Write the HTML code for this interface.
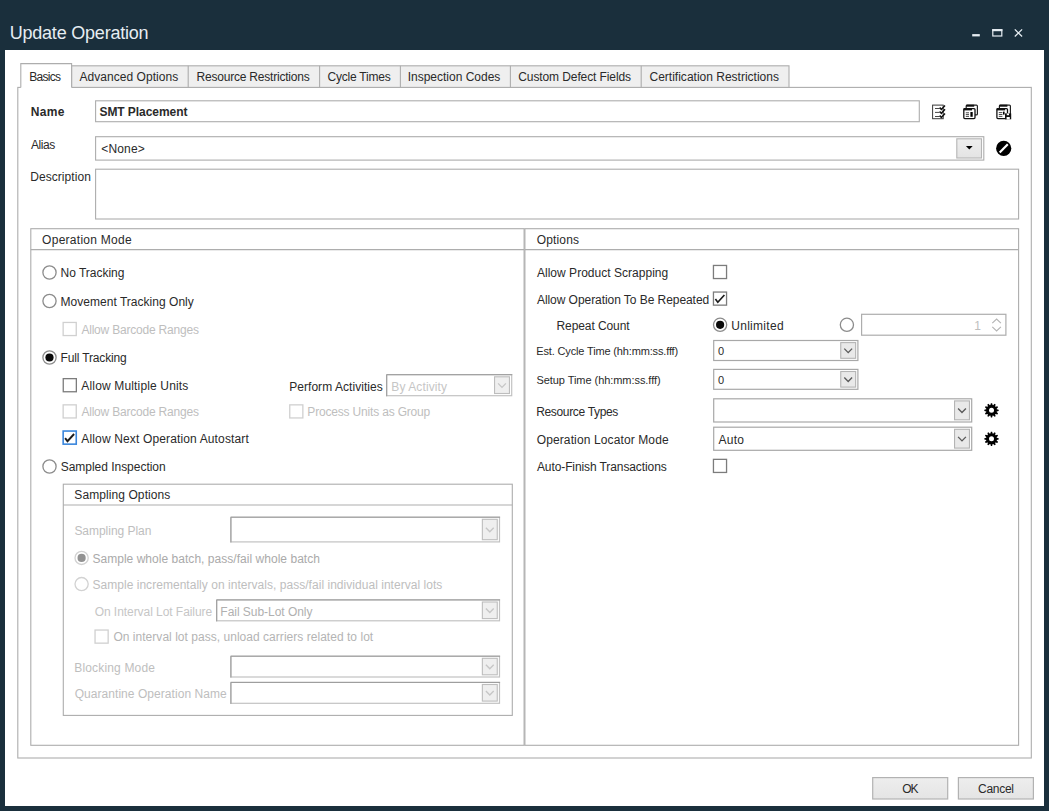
<!DOCTYPE html>
<html><head><meta charset="utf-8"><title>Update Operation</title>
<style>
html,body{margin:0;padding:0;}
body{width:1049px;height:811px;overflow:hidden;background:#1a2f3c;position:relative;font-family:"Liberation Sans",sans-serif;}
.t{position:absolute;white-space:nowrap;font-family:"Liberation Sans",sans-serif;}
.a{position:absolute;box-sizing:border-box;}
.win{left:5px;top:50px;width:1039px;height:756px;background:#fff;}
svg{position:absolute;overflow:visible;}

</style></head>
<body>
<div class="a win"></div>
<svg style="left:0;top:0" width="1049" height="811" viewBox="0 0 1049 811">
<defs><linearGradient id="bg" x1="0" y1="0" x2="0" y2="1"><stop offset="0" stop-color="#eeeeee"/><stop offset="1" stop-color="#e4e4e4"/></linearGradient></defs>
<rect x="972.2" y="34.1" width="7.6" height="2.3" fill="#e6edf2"/>
<rect x="992.8" y="29.8" width="9" height="6.2" fill="none" stroke="#e6edf2" stroke-width="1.2"/>
<rect x="992.2" y="29.1" width="10.2" height="2.1" fill="#e6edf2"/>
<path d="M1014.8 29.4 L1022.1 36.5 M1022.1 29.4 L1014.8 36.5" stroke="#e6edf2" fill="none" stroke-width="1.3"/>
<rect x="17.80" y="87.40" width="1013.50" height="670.60" fill="#fff" stroke="#adadad" stroke-width="1.1" />
<rect x="71.60" y="65.80" width="717.40" height="21.60" fill="#efefef" stroke="#adadad" stroke-width="1.1" />
<path d="M188.20 65.80 L188.20 87.40" stroke="#adadad" stroke-width="1.1" fill="none"/>
<path d="M319.60 65.80 L319.60 87.40" stroke="#adadad" stroke-width="1.1" fill="none"/>
<path d="M400.40 65.80 L400.40 87.40" stroke="#adadad" stroke-width="1.1" fill="none"/>
<path d="M510.40 65.80 L510.40 87.40" stroke="#adadad" stroke-width="1.1" fill="none"/>
<path d="M641.20 65.80 L641.20 87.40" stroke="#adadad" stroke-width="1.1" fill="none"/>
<path d="M20.8 88.0 V63.6 H71.6 V88.0 Z" fill="#fff" stroke="none"/>
<path d="M20.8 87.4 V63.6 H71.6 V87.4" stroke="#adadad" fill="none" stroke-width="1.1"/>
<rect x="95.60" y="100.80" width="823.70" height="20.90" fill="#fff" stroke="#adadad" stroke-width="1.1" />
<rect x="95.60" y="136.70" width="888.20" height="23.40" fill="#fff" stroke="#adadad" stroke-width="1.1" />
<rect x="956.80" y="138.80" width="24.70" height="19.20" fill="url(#bg)" stroke="#b5b5b5" stroke-width="1.1" />
<path d="M965.9 146.1 H972.7 L969.3 149.6 Z" stroke="none" fill="#000" stroke-width="1"/>
<rect x="95.60" y="169.20" width="923.00" height="49.80" fill="#fff" stroke="#adadad" stroke-width="1.1" />
<rect x="30.80" y="228.70" width="493.30" height="516.60" fill="none" stroke="#adadad" stroke-width="1.1" />
<path d="M30.80 249.60 L524.10 249.60" stroke="#adadad" stroke-width="1.1" fill="none"/>
<rect x="524.90" y="228.70" width="493.70" height="516.60" fill="none" stroke="#adadad" stroke-width="1.1" />
<path d="M524.90 249.60 L1018.60 249.60" stroke="#adadad" stroke-width="1.1" fill="none"/>
<rect x="63.30" y="484.20" width="449.00" height="231.20" fill="none" stroke="#adadad" stroke-width="1.1" />
<path d="M63.30 505.00 L512.30 505.00" stroke="#adadad" stroke-width="1.1" fill="none"/>
<circle cx="49.5" cy="272.5" r="6.6" fill="#fff" stroke="#8c8c8c" stroke-width="1.3"/>
<circle cx="49.5" cy="301.0" r="6.6" fill="#fff" stroke="#8c8c8c" stroke-width="1.3"/>
<rect x="63.15" y="322.45" width="13.10" height="13.10" fill="#fff" stroke="#d0d0d0" stroke-width="1.3" />
<circle cx="49.5" cy="357.5" r="6.6" fill="#fff" stroke="#8c8c8c" stroke-width="1.3"/>
<circle cx="49.5" cy="357.5" r="4.1" fill="#0a0a0a"/>
<rect x="63.25" y="378.65" width="13.10" height="13.10" fill="#fff" stroke="#7c7c7c" stroke-width="1.3" />
<rect x="63.15" y="404.85" width="13.10" height="13.10" fill="#fff" stroke="#d0d0d0" stroke-width="1.3" />
<rect x="63.15" y="431.05" width="13.10" height="13.10" fill="#fff" stroke="#3a86dc" stroke-width="1.6" />
<path d="M65.10 438.10 L67.50 441.20 L74.10 434.00" stroke="#1c1c1c" fill="none" stroke-width="1.9"/>
<circle cx="49.5" cy="466.5" r="6.6" fill="#fff" stroke="#8c8c8c" stroke-width="1.3"/>
<rect x="386.70" y="374.70" width="125.00" height="21.00" fill="#fff" stroke="#c2c2c2" stroke-width="1.2" />
<path d="M386.70 396.30 V374.70 H512.30" stroke="#9a9a9a" fill="none" stroke-width="1.0"/>
<rect x="494.55" y="376.80" width="14.90" height="16.70" fill="#efefef" stroke="#bdbdbd" stroke-width="1.1" />
<path d="M498.10 383.35 L502.00 387.35 L505.90 383.35" stroke="#c6c6c6" fill="none" stroke-width="1.35"/>
<rect x="289.75" y="404.85" width="13.10" height="13.10" fill="#fff" stroke="#d0d0d0" stroke-width="1.3" />
<rect x="230.90" y="517.20" width="268.60" height="24.70" fill="#fff" stroke="#c2c2c2" stroke-width="1.2" />
<path d="M230.90 542.50 V517.20 H500.10" stroke="#9a9a9a" fill="none" stroke-width="1.0"/>
<rect x="482.35" y="519.30" width="14.90" height="20.40" fill="#efefef" stroke="#bdbdbd" stroke-width="1.1" />
<path d="M485.90 527.70 L489.80 531.70 L493.70 527.70" stroke="#c6c6c6" fill="none" stroke-width="1.35"/>
<circle cx="81.6" cy="557.9" r="6.6" fill="#fff" stroke="#d2d2d2" stroke-width="1.3"/>
<circle cx="81.6" cy="557.9" r="4.1" fill="#929292"/>
<circle cx="81.6" cy="584.1" r="6.6" fill="#fff" stroke="#d2d2d2" stroke-width="1.3"/>
<rect x="216.70" y="599.90" width="282.80" height="20.90" fill="#fff" stroke="#c2c2c2" stroke-width="1.2" />
<path d="M216.70 621.40 V599.90 H500.10" stroke="#9a9a9a" fill="none" stroke-width="1.0"/>
<rect x="482.35" y="602.00" width="14.90" height="16.60" fill="#efefef" stroke="#bdbdbd" stroke-width="1.1" />
<path d="M485.90 608.50 L489.80 612.50 L493.70 608.50" stroke="#c6c6c6" fill="none" stroke-width="1.35"/>
<rect x="95.05" y="630.05" width="13.10" height="13.10" fill="#fff" stroke="#d0d0d0" stroke-width="1.3" />
<rect x="230.90" y="656.20" width="268.60" height="20.80" fill="#fff" stroke="#c2c2c2" stroke-width="1.2" />
<path d="M230.90 677.60 V656.20 H500.10" stroke="#9a9a9a" fill="none" stroke-width="1.0"/>
<rect x="482.35" y="658.30" width="14.90" height="16.50" fill="#efefef" stroke="#bdbdbd" stroke-width="1.1" />
<path d="M485.90 664.75 L489.80 668.75 L493.70 664.75" stroke="#c6c6c6" fill="none" stroke-width="1.35"/>
<rect x="230.90" y="682.40" width="268.60" height="20.90" fill="#fff" stroke="#c2c2c2" stroke-width="1.2" />
<path d="M230.90 703.90 V682.40 H500.10" stroke="#9a9a9a" fill="none" stroke-width="1.0"/>
<rect x="482.35" y="684.50" width="14.90" height="16.60" fill="#efefef" stroke="#bdbdbd" stroke-width="1.1" />
<path d="M485.90 691.00 L489.80 695.00 L493.70 691.00" stroke="#c6c6c6" fill="none" stroke-width="1.35"/>
<rect x="713.45" y="265.45" width="13.10" height="13.10" fill="#fff" stroke="#7c7c7c" stroke-width="1.3" />
<rect x="713.45" y="292.05" width="13.10" height="13.10" fill="#fff" stroke="#7c7c7c" stroke-width="1.3" />
<path d="M715.40 299.10 L717.80 302.20 L724.40 295.00" stroke="#1c1c1c" fill="none" stroke-width="1.7"/>
<circle cx="720.1" cy="324.8" r="6.6" fill="#fff" stroke="#8c8c8c" stroke-width="1.3"/>
<circle cx="720.1" cy="324.8" r="4.1" fill="#0a0a0a"/>
<circle cx="846.9" cy="324.8" r="6.6" fill="#fff" stroke="#8c8c8c" stroke-width="1.3"/>
<rect x="861.60" y="314.30" width="144.30" height="20.90" fill="#fff" stroke="#adadad" stroke-width="1.2" />
<path d="M992.3 323.1 L996.6 319 L1000.9 323.1 M992.3 326.9 L996.6 331 L1000.9 326.9" stroke="#b4b4b4" fill="none" stroke-width="1.1"/>
<rect x="713.70" y="340.50" width="144.20" height="20.00" fill="#fff" stroke="#a8a8a8" stroke-width="1.2" />
<rect x="840.75" y="342.60" width="14.90" height="15.70" fill="#e9e9e9" stroke="#b4b4b4" stroke-width="1.1" />
<path d="M844.30 348.65 L848.20 352.65 L852.10 348.65" stroke="#5a5a5a" fill="none" stroke-width="1.35"/>
<rect x="713.70" y="369.40" width="144.20" height="19.90" fill="#fff" stroke="#a8a8a8" stroke-width="1.2" />
<rect x="840.75" y="371.50" width="14.90" height="15.60" fill="#e9e9e9" stroke="#b4b4b4" stroke-width="1.1" />
<path d="M844.30 377.50 L848.20 381.50 L852.10 377.50" stroke="#5a5a5a" fill="none" stroke-width="1.35"/>
<rect x="713.70" y="398.80" width="258.00" height="23.20" fill="#fff" stroke="#a8a8a8" stroke-width="1.2" />
<rect x="954.55" y="400.90" width="14.90" height="18.90" fill="#e9e9e9" stroke="#b4b4b4" stroke-width="1.1" />
<path d="M958.10 408.55 L962.00 412.55 L965.90 408.55" stroke="#5a5a5a" fill="none" stroke-width="1.35"/>
<rect x="713.70" y="427.20" width="258.00" height="23.10" fill="#fff" stroke="#a8a8a8" stroke-width="1.2" />
<rect x="954.55" y="429.30" width="14.90" height="18.80" fill="#e9e9e9" stroke="#b4b4b4" stroke-width="1.1" />
<path d="M958.10 436.90 L962.00 440.90 L965.90 436.90" stroke="#5a5a5a" fill="none" stroke-width="1.35"/>
<rect x="713.45" y="459.35" width="13.10" height="13.10" fill="#fff" stroke="#7c7c7c" stroke-width="1.3" />
<path d="M998.67 409.69 L998.67 410.91 L996.78 411.43 L996.64 411.97 L998.02 413.36 L997.41 414.42 L995.51 413.92 L995.12 414.31 L995.62 416.21 L994.56 416.82 L993.17 415.44 L992.63 415.58 L992.11 417.47 L990.89 417.47 L990.37 415.58 L989.83 415.44 L988.44 416.82 L987.38 416.21 L987.88 414.31 L987.49 413.92 L985.59 414.42 L984.98 413.36 L986.36 411.97 L986.22 411.43 L984.33 410.91 L984.33 409.69 L986.22 409.17 L986.36 408.63 L984.98 407.24 L985.59 406.18 L987.49 406.68 L987.88 406.29 L987.38 404.39 L988.44 403.78 L989.83 405.16 L990.37 405.02 L990.89 403.13 L992.11 403.13 L992.63 405.02 L993.17 405.16 L994.56 403.78 L995.62 404.39 L995.12 406.29 L995.51 406.68 L997.41 406.18 L998.02 407.24 L996.64 408.63 L996.78 409.17 Z" stroke="none" fill="#000" stroke-width="1"/>
<circle cx="991.5" cy="410.3" r="2.5" fill="#fff"/>
<path d="M998.67 438.19 L998.67 439.41 L996.78 439.93 L996.64 440.47 L998.02 441.86 L997.41 442.92 L995.51 442.42 L995.12 442.81 L995.62 444.71 L994.56 445.32 L993.17 443.94 L992.63 444.08 L992.11 445.97 L990.89 445.97 L990.37 444.08 L989.83 443.94 L988.44 445.32 L987.38 444.71 L987.88 442.81 L987.49 442.42 L985.59 442.92 L984.98 441.86 L986.36 440.47 L986.22 439.93 L984.33 439.41 L984.33 438.19 L986.22 437.67 L986.36 437.13 L984.98 435.74 L985.59 434.68 L987.49 435.18 L987.88 434.79 L987.38 432.89 L988.44 432.28 L989.83 433.66 L990.37 433.52 L990.89 431.63 L992.11 431.63 L992.63 433.52 L993.17 433.66 L994.56 432.28 L995.62 432.89 L995.12 434.79 L995.51 435.18 L997.41 434.68 L998.02 435.74 L996.64 437.13 L996.78 437.67 Z" stroke="none" fill="#000" stroke-width="1"/>
<circle cx="991.5" cy="438.8" r="2.5" fill="#fff"/>
<rect x="872.70" y="777.60" width="75.00" height="21.40" fill="url(#bg)" stroke="#b2b2b2" stroke-width="1.2" />
<rect x="958.40" y="777.60" width="75.00" height="21.40" fill="url(#bg)" stroke="#b2b2b2" stroke-width="1.2" />
<circle cx="1003.7" cy="148.4" r="7.6" fill="#000"/>
<path d="M999.7 152.5 L1007.8 144.3" stroke="#fff" fill="none" stroke-width="2.2"/>
<!-- icon 1: checklist -->
<rect x="932.6" y="105.1" width="10.6" height="13.6" fill="#fff" stroke="#3a3a3a" stroke-width="1"/>
<path d="M935 108.5 H939.5 M935 112.4 H939.5 M935 116.5 H939.5" stroke="#333" stroke-width="0.9"/>
<path d="M939.6 107.6 L941.4 109.4 L945 105.4 M939.6 111.5 L941.4 113.3 L945 109.3 M939.6 115.6 L941.4 117.4 L945 113.4" stroke="#111" stroke-width="1.5" fill="none"/>
<!-- icon 2: stacked windows -->
<rect x="966.2" y="105.1" width="11.2" height="9.8" rx="1" fill="#fff" stroke="#222" stroke-width="1.2"/>
<rect x="966.2" y="104.7" width="8" height="2" fill="#111"/>
<rect x="963.8" y="108.6" width="11.2" height="10" rx="1" fill="#fff" stroke="#111" stroke-width="1.3"/>
<rect x="963.6" y="108.2" width="8.4" height="2.2" fill="#111"/>
<path d="M965.8 112.8 H969 M965.8 114.6 H969 M965.8 116.4 H969" stroke="#333" stroke-width="0.9"/>
<rect x="970.4" y="112" width="2.3" height="4.8" fill="#000"/>
<!-- icon 3: stacked windows + save -->
<rect x="999.4" y="105.1" width="11" height="9.8" rx="1" fill="#fff" stroke="#222" stroke-width="1.2"/>
<rect x="999.4" y="104.7" width="8" height="2" fill="#111"/>
<rect x="996.9" y="108.6" width="10.6" height="10" rx="1" fill="#fff" stroke="#111" stroke-width="1.3"/>
<rect x="996.7" y="108.2" width="8.4" height="2.2" fill="#111"/>
<path d="M998.8 112.6 H1002.4 M998.8 114.5 H1002.4 M998.8 116.4 H1002.4" stroke="#333" stroke-width="0.9"/>
<rect x="1003" y="111.6" width="1.6" height="3" fill="#000"/>
<rect x="1005" y="113.4" width="6.2" height="5.9" fill="#111"/>
<rect x="1006.8" y="113.4" width="2.2" height="1.8" fill="#fff"/>
<rect x="1006.6" y="117" width="3.2" height="2.3" fill="#fff"/>
</svg>

<span class="t" id="t0" style="left:9.64px;top:23px;font-size:18px;line-height:20px;color:#e6edf2;letter-spacing:-0.206px;">Update Operation</span>
<span class="t" id="t1" style="left:29.17px;top:70px;font-size:12px;line-height:14px;color:#2a2a2a;letter-spacing:-0.678px;">Basics</span>
<span class="t" id="t2" style="left:79.45px;top:70px;font-size:12px;line-height:14px;color:#2a2a2a;letter-spacing:0.052px;">Advanced Options</span>
<span class="t" id="t3" style="left:196.57px;top:70px;font-size:12px;line-height:14px;color:#2a2a2a;letter-spacing:-0.211px;">Resource Restrictions</span>
<span class="t" id="t4" style="left:327.54px;top:70px;font-size:12px;line-height:14px;color:#2a2a2a;letter-spacing:-0.215px;">Cycle Times</span>
<span class="t" id="t5" style="left:407.71px;top:70px;font-size:12px;line-height:14px;color:#2a2a2a;letter-spacing:-0.009px;">Inspection Codes</span>
<span class="t" id="t6" style="left:518.25px;top:70px;font-size:12px;line-height:14px;color:#2a2a2a;letter-spacing:-0.099px;">Custom Defect Fields</span>
<span class="t" id="t7" style="left:649.53px;top:70px;font-size:12px;line-height:14px;color:#2a2a2a;letter-spacing:0.003px;">Certification Restrictions</span>
<span class="t" id="t8" style="left:30.65px;top:105px;font-size:12px;line-height:14px;color:#2a2a2a;font-weight:bold;letter-spacing:0.333px;">Name</span>
<span class="t" id="t9" style="left:99.46px;top:105px;font-size:12px;line-height:14px;color:#2a2a2a;font-weight:bold;letter-spacing:-0.061px;">SMT Placement</span>
<span class="t" id="t10" style="left:30.91px;top:138px;font-size:12px;line-height:14px;color:#2a2a2a;letter-spacing:-0.410px;">Alias</span>
<span class="t" id="t11" style="left:101.27px;top:142px;font-size:12px;line-height:14px;color:#2a2a2a;letter-spacing:0.169px;">&lt;None&gt;</span>
<span class="t" id="t12" style="left:30.17px;top:170px;font-size:12px;line-height:14px;color:#2a2a2a;letter-spacing:0.072px;">Description</span>
<span class="t" id="t13" style="left:42.08px;top:233px;font-size:12px;line-height:14px;color:#2a2a2a;letter-spacing:0.274px;">Operation Mode</span>
<span class="t" id="t14" style="left:536.69px;top:233px;font-size:12px;line-height:14px;color:#2a2a2a;letter-spacing:0.166px;">Options</span>
<span class="t" id="t15" style="left:60.56px;top:266px;font-size:12px;line-height:14px;color:#2a2a2a;letter-spacing:-0.021px;">No Tracking</span>
<span class="t" id="t16" style="left:60.56px;top:295px;font-size:12px;line-height:14px;color:#2a2a2a;letter-spacing:0.025px;">Movement Tracking Only</span>
<span class="t" id="t17" style="left:81.38px;top:323px;font-size:12px;line-height:14px;color:#bebebe;letter-spacing:-0.203px;">Allow Barcode Ranges</span>
<span class="t" id="t18" style="left:60.56px;top:351px;font-size:12px;line-height:14px;color:#2a2a2a;letter-spacing:-0.148px;">Full Tracking</span>
<span class="t" id="t19" style="left:81.35px;top:379px;font-size:12px;line-height:14px;color:#2a2a2a;letter-spacing:0.155px;">Allow Multiple Units</span>
<span class="t" id="t20" style="left:289.18px;top:380px;font-size:12px;line-height:14px;color:#2a2a2a;letter-spacing:0.051px;">Perform Activities</span>
<span class="t" id="t21" style="left:391.31px;top:380px;font-size:12px;line-height:14px;color:#c6c6c6;letter-spacing:0.097px;">By Activity</span>
<span class="t" id="t22" style="left:81.38px;top:405px;font-size:12px;line-height:14px;color:#bebebe;letter-spacing:-0.203px;">Allow Barcode Ranges</span>
<span class="t" id="t23" style="left:307.36px;top:405px;font-size:12px;line-height:14px;color:#bebebe;letter-spacing:-0.181px;">Process Units as Group</span>
<span class="t" id="t24" style="left:81.37px;top:432px;font-size:12px;line-height:14px;color:#2a2a2a;letter-spacing:0.139px;">Allow Next Operation Autostart</span>
<span class="t" id="t25" style="left:60.68px;top:460px;font-size:12px;line-height:14px;color:#2a2a2a;letter-spacing:-0.024px;">Sampled Inspection</span>
<span class="t" id="t26" style="left:74.3px;top:488px;font-size:12px;line-height:14px;color:#2a2a2a;letter-spacing:0.088px;">Sampling Options</span>
<span class="t" id="t27" style="left:74.38px;top:524px;font-size:12px;line-height:14px;color:#bebebe;letter-spacing:-0.028px;">Sampling Plan</span>
<span class="t" id="t28" style="left:92.4px;top:552px;font-size:12px;line-height:14px;color:#aaaaaa;letter-spacing:0.035px;">Sample whole batch, pass/fail whole batch</span>
<span class="t" id="t29" style="left:92.44px;top:578px;font-size:12px;line-height:14px;color:#bebebe;letter-spacing:0.035px;">Sample incrementally on intervals, pass/fail individual interval lots</span>
<span class="t" id="t30" style="left:94.69px;top:605px;font-size:12px;line-height:14px;color:#c6c6c6;letter-spacing:-0.054px;">On Interval Lot Failure</span>
<span class="t" id="t31" style="left:220.35px;top:605px;font-size:12px;line-height:14px;color:#b0b0b0;letter-spacing:-0.037px;">Fail Sub-Lot Only</span>
<span class="t" id="t32" style="left:113.42px;top:630px;font-size:12px;line-height:14px;color:#b4b4b4;letter-spacing:0.032px;">On interval lot pass, unload carriers related to lot</span>
<span class="t" id="t33" style="left:74.25px;top:661px;font-size:12px;line-height:14px;color:#bebebe;letter-spacing:0.161px;">Blocking Mode</span>
<span class="t" id="t34" style="left:74.69px;top:687px;font-size:12px;line-height:14px;color:#bebebe;letter-spacing:0.051px;">Quarantine Operation Name</span>
<span class="t" id="t35" style="left:536.96px;top:266px;font-size:12px;line-height:14px;color:#2a2a2a;letter-spacing:0.024px;">Allow Product Scrapping</span>
<span class="t" id="t36" style="left:536.96px;top:293px;font-size:12px;line-height:14px;color:#2a2a2a;letter-spacing:-0.057px;">Allow Operation To Be Repeated</span>
<span class="t" id="t37" style="left:556.56px;top:319px;font-size:12px;line-height:14px;color:#2a2a2a;letter-spacing:-0.094px;">Repeat Count</span>
<span class="t" id="t38" style="left:731.21px;top:319px;font-size:12px;line-height:14px;color:#2a2a2a;letter-spacing:0.292px;">Unlimited</span>
<span class="t" id="t39" style="left:974.32px;top:319px;font-size:12px;line-height:14px;color:#bebebe;letter-spacing:0.000px;">1</span>
<span class="t" id="t40" style="left:536.25px;top:345px;font-size:11px;line-height:12px;color:#2a2a2a;letter-spacing:-0.150px;">Est. Cycle Time (hh:mm:ss.fff)</span>
<span class="t" id="t41" style="left:718.1px;top:345px;font-size:11px;line-height:12px;color:#2a2a2a;letter-spacing:0.000px;">0</span>
<span class="t" id="t42" style="left:536.48px;top:374px;font-size:11px;line-height:12px;color:#2a2a2a;letter-spacing:-0.057px;">Setup Time (hh:mm:ss.fff)</span>
<span class="t" id="t43" style="left:718.1px;top:374px;font-size:11px;line-height:12px;color:#2a2a2a;letter-spacing:0.000px;">0</span>
<span class="t" id="t44" style="left:536.18px;top:405px;font-size:12px;line-height:14px;color:#2a2a2a;letter-spacing:-0.331px;">Resource Types</span>
<span class="t" id="t45" style="left:536.69px;top:433px;font-size:12px;line-height:14px;color:#2a2a2a;letter-spacing:0.121px;">Operation Locator Mode</span>
<span class="t" id="t46" style="left:718.55px;top:433px;font-size:12px;line-height:14px;color:#2a2a2a;letter-spacing:0.238px;">Auto</span>
<span class="t" id="t47" style="left:536.96px;top:460px;font-size:12px;line-height:14px;color:#2a2a2a;letter-spacing:-0.100px;">Auto-Finish Transactions</span>
<span class="t" id="t48" style="left:902.13px;top:782px;font-size:12px;line-height:14px;color:#2a2a2a;letter-spacing:-1.073px;">OK</span>
<span class="t" id="t49" style="left:977.98px;top:782px;font-size:12px;line-height:14px;color:#2a2a2a;letter-spacing:-0.258px;">Cancel</span>
</body></html>
